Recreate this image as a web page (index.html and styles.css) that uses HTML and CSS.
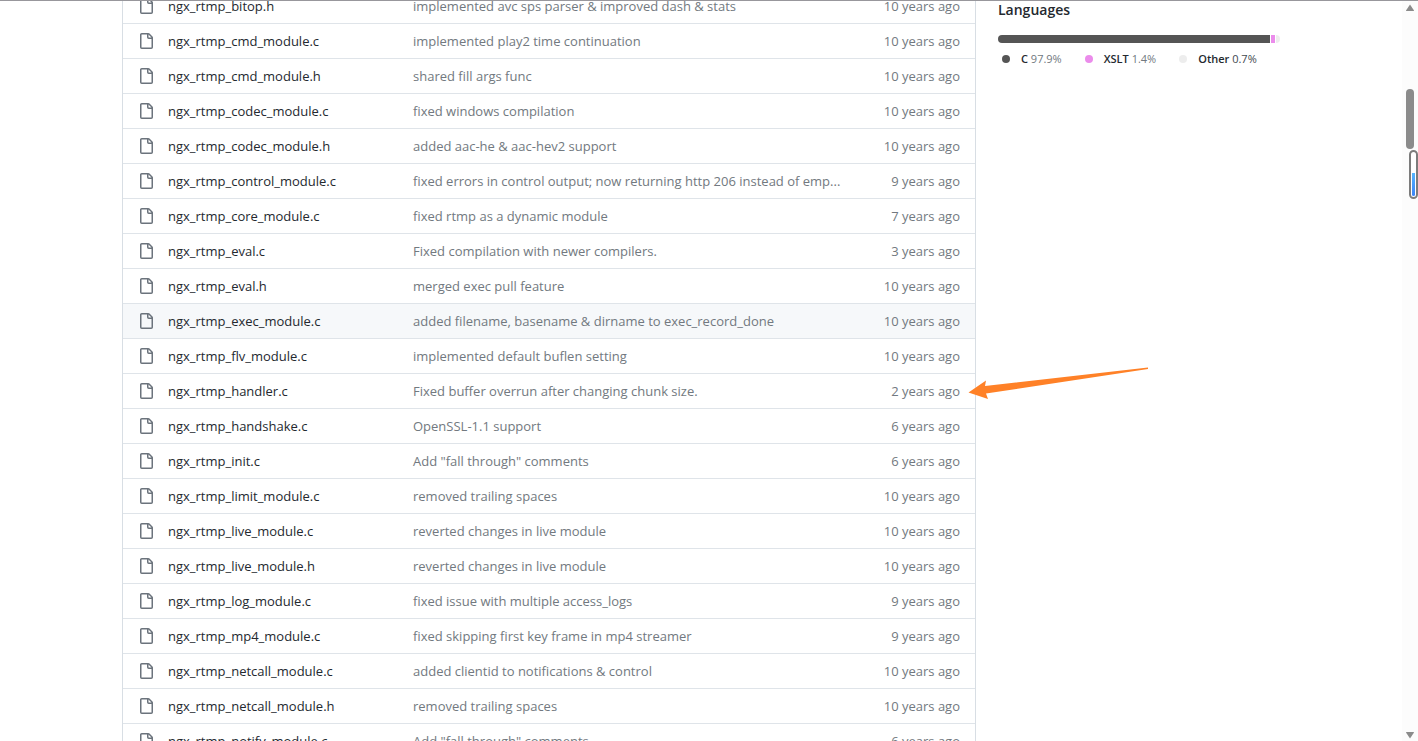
FILE: index.html
```
<!DOCTYPE html>
<html lang="en">
<head>
    <meta charset="UTF-8">
    <meta name="viewport" content="width=device-width, initial-scale=1.0">
    <title>nginx-rtmp-module</title>
    <link rel="stylesheet" href="styles.css">
</head>
<body>
    <svg class="symbols" aria-hidden="true">
        <symbol id="file" viewBox="0 0 16 16">
            <path d="M2 1.75C2 .784 2.784 0 3.75 0h6.586c.464 0 .909.184 1.237.513l2.914 2.914c.329.328.513.773.513 1.237v9.586A1.75 1.75 0 0 1 13.25 16h-9.5A1.75 1.75 0 0 1 2 14.25Zm1.75-.25a.25.25 0 0 0-.25.25v12.5c0 .138.112.25.25.25h9.5a.25.25 0 0 0 .25-.25V6h-2.75A1.75 1.75 0 0 1 9 4.25V1.5Zm6.75.062V4.25c0 .138.112.25.25.25h2.688l-.011-.013-2.914-2.914-.013-.011Z"/>
        </symbol>
    </svg>
    <div class="window">
        <main class="repo">
            <div class="files">
                <table class="file-table">
                    <tbody id="fileRows"></tbody>
                </table>
            </div>
            <aside class="sidebar">
                <h2>Languages</h2>
                <div class="lang-bar">
                    <span class="lang-c" style="width: 97.9%"></span>
                    <span class="lang-xslt" style="width: 1.4%"></span>
                    <span class="lang-other" style="width: 0.7%"></span>
                </div>
                <ul class="lang-list">
                    <li><i class="dot lang-c"></i><a href="#"><b>C</b> 97.9%</a></li>
                    <li><i class="dot lang-xslt"></i><a href="#"><b>XSLT</b> 1.4%</a></li>
                    <li><i class="dot lang-other"></i><span class="other"><b>Other</b> 0.7%</span></li>
                </ul>
            </aside>
        </main>
        <div class="scrollbar">
            <svg width="10" height="8" viewBox="0 0 10 8"><path d="M5 .5 9 6.5Q9 7 8.500 7h-7Q1 7 1 6.500Z"/></svg>
            <div class="thumb"></div>
            <svg class="down" width="10" height="8" viewBox="0 0 10 8"><path d="M5 7.500 1 1.500Q1 1 1.500 1h7Q9 1 9 1.500Z"/></svg>
        </div>
        <div class="gauge"><div class="gauge-level"></div></div>
        <svg class="arrow" width="182" height="34" viewBox="0 0 182 34">
            <path d="M.5 25.500 18 13.500 17 19 180 .5v1.500L18 26.500l2 5.500Z"/>
        </svg>
    </div>

    <script>
        const files = [
            ["ngx_rtmp_bitop.h", "implemented avc sps parser & improved dash & stats", "10 years ago"],
            ["ngx_rtmp_cmd_module.c", "implemented play2 time continuation", "10 years ago"],
            ["ngx_rtmp_cmd_module.h", "shared fill args func", "10 years ago"],
            ["ngx_rtmp_codec_module.c", "fixed windows compilation", "10 years ago"],
            ["ngx_rtmp_codec_module.h", "added aac-he & aac-hev2 support", "10 years ago"],
            ["ngx_rtmp_control_module.c", "fixed errors in control output; now returning http 206 instead of emp...", "9 years ago"],
            ["ngx_rtmp_core_module.c", "fixed rtmp as a dynamic module", "7 years ago"],
            ["ngx_rtmp_eval.c", "Fixed compilation with newer compilers.", "3 years ago"],
            ["ngx_rtmp_eval.h", "merged exec pull feature", "10 years ago"],
            ["ngx_rtmp_exec_module.c", "added filename, basename & dirname to exec_record_done", "10 years ago"],
            ["ngx_rtmp_flv_module.c", "implemented default buflen setting", "10 years ago"],
            ["ngx_rtmp_handler.c", "Fixed buffer overrun after changing chunk size.", "2 years ago"],
            ["ngx_rtmp_handshake.c", "OpenSSL-1.1 support", "6 years ago"],
            ["ngx_rtmp_init.c", "Add \"fall through\" comments", "6 years ago"],
            ["ngx_rtmp_limit_module.c", "removed trailing spaces", "10 years ago"],
            ["ngx_rtmp_live_module.c", "reverted changes in live module", "10 years ago"],
            ["ngx_rtmp_live_module.h", "reverted changes in live module", "10 years ago"],
            ["ngx_rtmp_log_module.c", "fixed issue with multiple access_logs", "9 years ago"],
            ["ngx_rtmp_mp4_module.c", "fixed skipping first key frame in mp4 streamer", "9 years ago"],
            ["ngx_rtmp_netcall_module.c", "added clientid to notifications & control", "10 years ago"],
            ["ngx_rtmp_netcall_module.h", "removed trailing spaces", "10 years ago"],
            ["ngx_rtmp_notify_module.c", "Add \"fall through\" comments", "6 years ago"]
        ];
        const active = "ngx_rtmp_exec_module.c";

        function addLink(cell, text) {
            const link = document.createElement("a");
            link.href = "#";
            link.textContent = text;
            cell.appendChild(link);
        }

        const body = document.getElementById("fileRows");
        files.forEach(([name, message, age]) => {
            const row = body.insertRow();
            if (name === active) row.className = "active";

            const icon = row.insertCell();
            icon.className = "icon";
            icon.innerHTML = '<svg width="16" height="16"><use href="#file"/></svg>';

            const nameCell = row.insertCell();
            nameCell.className = "name";
            addLink(nameCell, name);

            const messageCell = row.insertCell();
            messageCell.className = "message";
            addLink(messageCell, message);

            const ageCell = row.insertCell();
            ageCell.className = "age";
            ageCell.textContent = age;
        });
    </script>
</body>
</html>
```
FILE: styles.css
```
* {
    box-sizing: border-box;
}
body {
    margin: 0;
    font-family: "Segoe UI", "Open Sans", "Noto Sans", sans-serif;
    font-size: 13px;
    color: #24292f;
    background: #fff;
}
a {
    color: inherit;
    text-decoration: none;
}
.symbols {
    position: absolute;
    width: 0;
    height: 0;
}
.window {
    position: relative;
    display: flex;
    height: 100vh;
    overflow: hidden;
    border-top: 1px solid #98979c;
}
.repo {
    flex: 1;
    display: flex;
    gap: 22px;
    max-width: 1158px;
    margin: 0 auto;
}

/* file list */
.files {
    flex: 1;
    margin-top: -13px;
}
.file-table {
    width: 100%;
    table-layout: fixed;
    border-collapse: separate;
    border-spacing: 0;
    border: 1px solid #d8dee4;
    border-top: 0;
}
.file-table td {
    height: 35px;
    padding: 0;
    border-top: 1px solid #dfe4e9;
    white-space: nowrap;
    line-height: 20px;
}
.file-table .icon {
    width: 45px;
    padding-left: 15px;
}
.icon svg {
    display: block;
    fill: #6b737c;
}
.file-table .name {
    width: 245px;
}
.message {
    color: #727980;
}
.file-table .age {
    width: 120px;
    padding-right: 15px;
    text-align: right;
    color: #727980;
}
.active td {
    background: #f6f8fa;
}

/* languages */
.sidebar {
    width: 282px;
}
.sidebar h2 {
    margin: 0 0 16px;
    font-size: 14px;
    font-weight: 600;
    line-height: 18px;
}
.lang-bar {
    display: flex;
    gap: 1px;
    height: 8px;
    overflow: hidden;
    border-radius: 4px;
}
.lang-bar span {
    min-width: 4px;
}
.lang-c {
    background: #555;
}
.lang-xslt {
    background: #eb8ceb;
}
.lang-other {
    background: #ededed;
}
.lang-list {
    display: flex;
    gap: 23px;
    margin: 8px 0 0;
    padding: 0 0 0 4px;
    list-style: none;
    font-size: 11px;
    line-height: 16px;
    color: #727980;
}
.lang-list li {
    display: flex;
    align-items: center;
    gap: 11px;
}
.lang-list b {
    font-weight: 600;
    color: #24292f;
}
.lang-list .other {
    color: #424950;
}
.dot {
    width: 8px;
    height: 8px;
    border-radius: 50%;
}

/* scroll track */
.scrollbar {
    display: flex;
    flex-direction: column;
    align-items: center;
    width: 16px;
    padding: 3px 0 2px;
    background: #fcfcfc;
}
.scrollbar svg {
    fill: #8b8b8b;
}
.scrollbar .down {
    margin-top: auto;
}
.thumb {
    width: 8px;
    height: 60px;
    margin-top: 77px;
    border-radius: 4px;
    background: #8b8b8b;
}

/* overlays */
.gauge {
    position: absolute;
    top: 149px;
    right: 0;
    display: flex;
    align-items: flex-end;
    width: 9px;
    height: 49px;
    padding: 1px;
    border: 2px solid #7c7c7c;
    border-radius: 5px;
    background: #fff;
}
.gauge-level {
    width: 100%;
    height: 23px;
    border-radius: 0 0 2px 2px;
    background: linear-gradient(#55b5ff, #3b82f6);
}
.arrow {
    position: absolute;
    top: 366px;
    left: 968px;
    fill: #ff8127;
}
```
